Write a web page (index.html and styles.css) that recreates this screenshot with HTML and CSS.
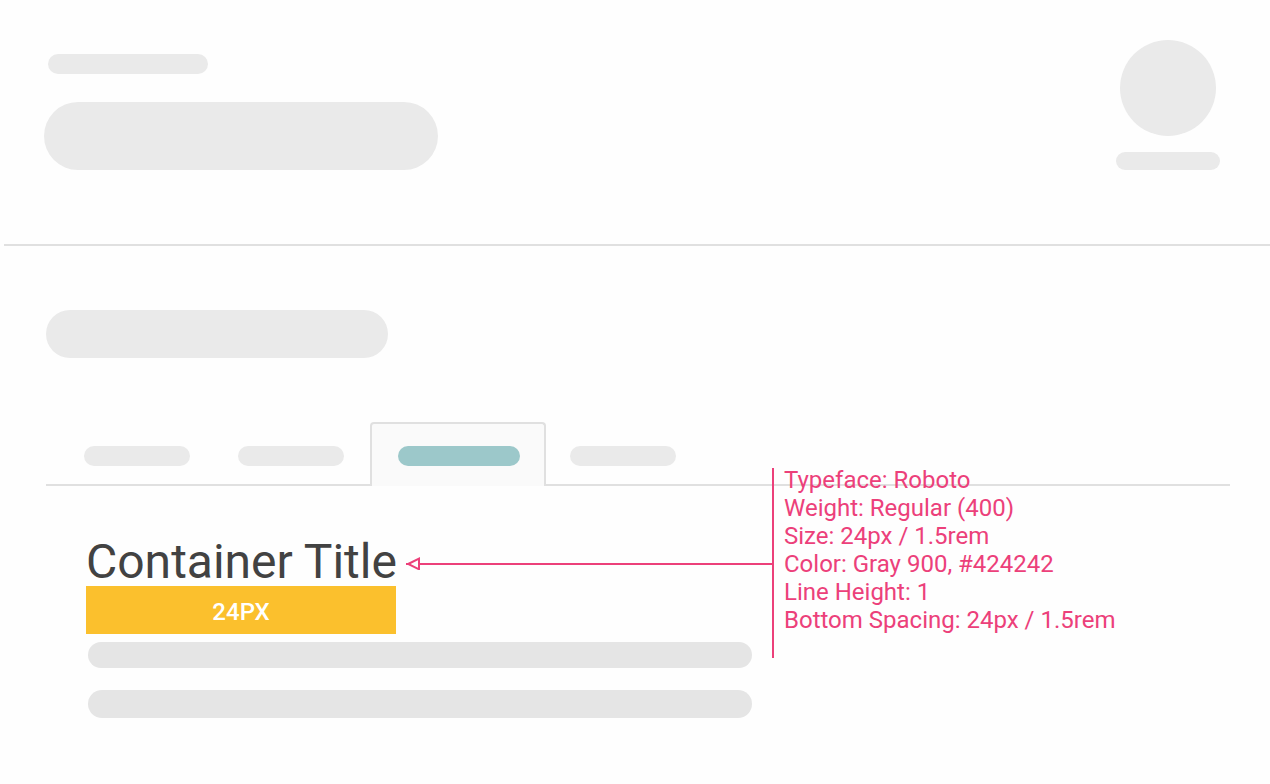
FILE: index.html
```html
<!DOCTYPE html>
<html lang="en">
<head>
<meta charset="utf-8">
<meta name="viewport" content="width=device-width, initial-scale=1">
<title>Container Title</title>
<link rel="stylesheet" href="styles.css">
</head>
<body>
<header class="page-header">
  <div class="heading">
    <div class="bar bar-eyebrow"></div>
    <div class="bar bar-heading"></div>
  </div>
  <div class="profile">
    <div class="avatar"></div>
    <div class="bar bar-name"></div>
  </div>
</header>
<main class="content">
  <div class="bar bar-section"></div>
  <div class="tabs">
    <div class="tab"><div class="bar bar-tab"></div></div>
    <div class="tab"><div class="bar bar-tab"></div></div>
    <div class="tab tab-active"><div class="bar bar-tab"></div></div>
    <div class="tab"><div class="bar bar-tab"></div></div>
  </div>
  <section class="panel">
    <div class="title-row">
      <h1 class="title">Container Title</h1>
      <svg class="arrow" aria-hidden="true">
        <path d="M2.2 10 L13 4.7 V15.3 Z" fill="none" stroke="#ec407a" stroke-width="2"/>
        <path d="M0 10 H4" stroke="#ec407a" stroke-width="2"/>
        <line x1="13" y1="10" x2="100%" y2="10" stroke="#ec407a" stroke-width="2"/>
      </svg>
    </div>
    <div class="spacing">24PX</div>
    <div class="copy">
      <div class="copy-line"></div>
      <div class="copy-line copy-line-tall"></div>
    </div>
    <ul class="spec">
      <li>Typeface: Roboto</li>
      <li>Weight: Regular (400)</li>
      <li>Size: 24px / 1.5rem</li>
      <li>Color: Gray 900, #424242</li>
      <li>Line Height: 1</li>
      <li>Bottom Spacing: 24px / 1.5rem</li>
    </ul>
  </section>
</main>
</body>
</html>
```
FILE: styles.css
```css
* { box-sizing: border-box; }

body {
  margin: 0;
  background: #fefefe;
  color: #424242;
  font-family: Roboto, "Liberation Sans", sans-serif;
}

.bar {
  height: 20px;
  border-radius: 10px;
  background: #eaeaea;
}

.page-header {
  display: flex;
  justify-content: space-between;
  align-items: flex-start;
  margin-left: 4px;
  padding: 40px 50px 74px 40px;
  border-bottom: 2px solid #e0e0e0;
}

.heading { padding-top: 14px; }
.bar-eyebrow { width: 160px; margin: 0 0 28px 4px; }
.bar-heading { width: 394px; height: 68px; border-radius: 34px; }

.profile {
  display: flex;
  flex-direction: column;
  align-items: center;
  gap: 16px;
}
.avatar {
  width: 96px;
  height: 96px;
  border-radius: 50%;
  background: #eaeaea;
}
.bar-name { width: 104px; height: 18px; }

.content { padding: 64px 40px 64px 46px; }
.bar-section { width: 342px; height: 48px; border-radius: 24px; }

.tabs {
  display: flex;
  margin-top: 64px;
  padding-left: 14px;
  border-bottom: 2px solid #e0e0e0;
}
.tab { padding: 24px 24px 18px; }
.bar-tab { width: 106px; }
.tab-active {
  margin: 0 0 -2px 2px;
  padding: 22px 24px 20px 26px;
  border: 2px solid #e0e0e0;
  border-bottom: 0;
  border-radius: 4px 4px 0 0;
  background: #fafafa;
}
.tab-active .bar-tab { width: 122px; background: #9cc8ca; }

.panel {
  position: relative;
  margin: 52px 0 0 40px;
}
.title-row {
  display: flex;
  align-items: center;
  gap: 8px;
  width: 686px;
}
.title {
  flex: none;
  min-width: 312px;
  margin: 0;
  font-size: 48px;
  font-weight: 400;
  line-height: 48px;
}
.arrow { flex: 1; min-width: 0; height: 16px; }

.spacing {
  width: 310px;
  padding-top: 12px;
  padding-bottom: 8px;
  background: #fbc02d;
  color: #fff;
  font-size: 24px;
  font-weight: 500;
  line-height: 28px;
  text-align: center;
}

.copy {
  display: grid;
  gap: 22px;
  width: 664px;
  margin: 8px 0 0 2px;
}
.copy-line { height: 26px; border-radius: 14px; background: #e5e5e5; }
.copy-line-tall { height: 28px; }

/* Callout drawn over the tab rule and the panel */
.spec {
  position: absolute;
  top: -72px;
  left: 686px;
  margin: 0;
  padding: 0 0 24px 12px;
  list-style: none;
  color: #ec407a;
  font-size: 24px;
  line-height: 28px;
  white-space: nowrap;
}
.spec::before {
  content: "";
  position: absolute;
  top: 2px;
  bottom: 0;
  left: 0;
  width: 2px;
  background: #ec407a;
}
```
